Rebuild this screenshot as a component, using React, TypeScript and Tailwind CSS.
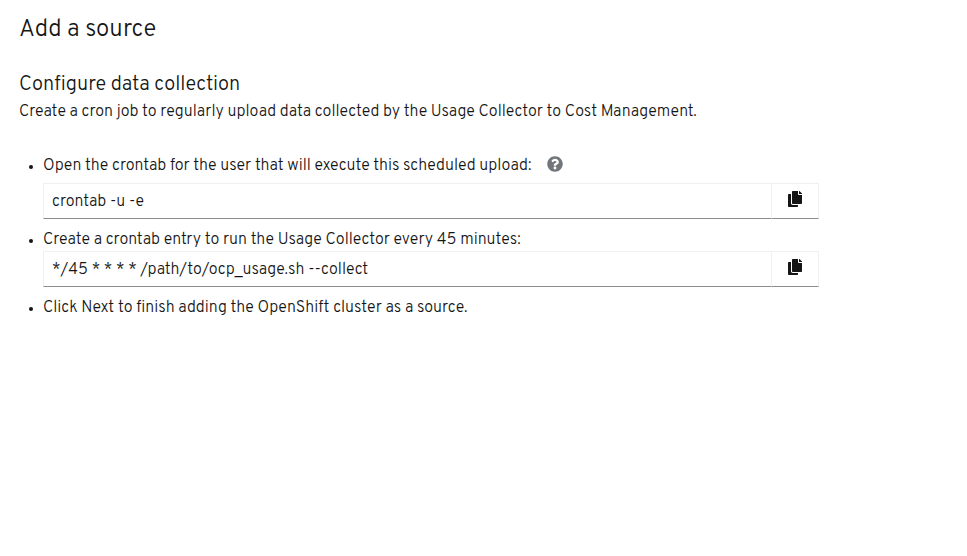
import React from "react";

function CopyIcon() {
  return (
    <svg viewBox="0 0 448 512" className="w-[14px] h-[16px]" fill="#151515">
      <path d="M320 448v40c0 13.255-10.745 24-24 24H24c-13.255 0-24-10.745-24-24V120c0-13.255 10.745-24 24-24h72v296c0 30.879 25.121 56 56 56h168zm0-344V0H152c-13.255 0-24 10.745-24 24v368c0 13.255 10.745 24 24 24h272c13.255 0 24-10.745 24-24V128H344c-13.2 0-24-10.8-24-24zm120.971-31.029L375.029 7.029A24 24 0 0 0 358.059 0H352v96h96v-6.059a24 24 0 0 0-7.029-16.97z" />
    </svg>
  );
}

function HelpIcon() {
  return (
    <svg viewBox="0 0 512 512" className="w-[16px] h-[16px]" fill="#72767b">
      <path d="M504 256c0 136.997-111.043 248-248 248S8 392.997 8 256C8 119.083 119.043 8 256 8s248 111.083 248 248zM262.655 90c-54.497 0-89.255 22.957-116.549 63.758-3.536 5.286-2.353 12.415 2.715 16.258l34.699 26.31c5.205 3.947 12.621 3.008 16.665-2.122 17.864-22.658 30.113-35.797 57.303-35.797 20.429 0 45.698 13.148 45.698 32.958 0 14.976-12.363 22.667-32.534 33.976C247.128 238.528 216 254.941 216 296v4c0 6.627 5.373 12 12 12h56c6.627 0 12-5.373 12-12v-1.333c0-28.462 83.186-29.647 83.186-106.667 0-58.002-60.165-102-116.531-102zM256 338c-25.365 0-46 20.635-46 46 0 25.364 20.635 46 46 46s46-20.636 46-46c0-25.365-20.635-46-46-46z" />
    </svg>
  );
}

function CopyRow({ value }: { value: string }) {
  return (
    <div className="flex h-[36px] w-[776px]">
      <div className="flex-1 flex items-center px-[8px] pt-[2px] border border-[#f0f0f0] border-b-[#8a8d90] text-[16px] text-[#151515] bg-white">
        {value}
      </div>
      <div className="w-[47px] flex items-center justify-center border-t border-r border-[#f0f0f0] border-b border-b-[#8a8d90] bg-white pb-[4px]">
        <CopyIcon />
      </div>
    </div>
  );
}

export default function App() {
  return (
    <div className="w-[967px] h-[556px] bg-white text-[#151515] pl-[19px] overflow-hidden font-light font-['Overpass','Liberation_Sans',sans-serif]">
      <h1 className="text-[24px] leading-[29px] pt-[16px]">Add a source</h1>
      <h2 className="text-[20px] leading-[24px] mt-[28px]">Configure data collection</h2>
      <p className="text-[16px] leading-[24px] mt-[3px] tracking-[-0.01px]">
        Create a cron job to regularly upload data collected by the Usage Collector to Cost Management.
      </p>
      <ul className="list-disc pl-[24px] mt-[29px] text-[16px] leading-[24px] marker:text-[13px]">
        <li className="pt-[1px] h-[30px] tracking-[-0.01px]">
          <span className="inline-flex items-center">
            Open the crontab for the user that will execute this scheduled upload:
            <span className="ml-[16px] mb-[4px]"><HelpIcon /></span>
          </span>
        </li>
        <li className="list-none"><CopyRow value="crontab -u -e" /></li>
        <li className="mt-[8px] pt-[1px] h-[24px]">Create a crontab entry to run the Usage Collector every 45 minutes:</li>
        <li className="list-none"><CopyRow value="*/45 * * * * /path/to/ocp_usage.sh --collect" /></li>
        <li className="mt-[8px] pt-[1px] h-[24px] tracking-[-0.02px]">Click Next to finish adding the OpenShift cluster as a source.</li>
      </ul>
    </div>
  );
}
